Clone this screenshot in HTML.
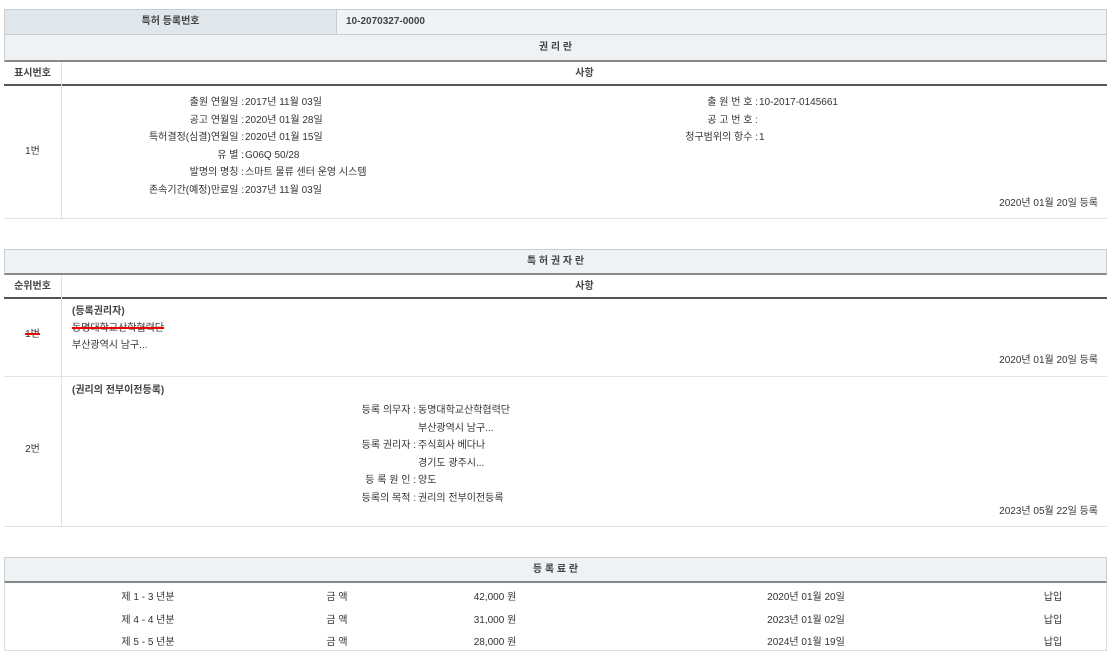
<!DOCTYPE html>
<html><head><meta charset="utf-8"><style>
*{margin:0;padding:0;box-sizing:border-box}
body{width:1112px;height:657px;background:#fff;font-family:"Liberation Sans","Noto Sans CJK KR",sans-serif;font-size:10px;color:#333;position:relative;overflow:hidden}
div{position:absolute}
.t{white-space:nowrap;line-height:12px}
.r{text-align:right}
.c{text-align:center}
.b{font-weight:bold;color:#444}
.hd{background:#eef2f5;border:1px solid #c8cdd1;border-bottom:2px solid #888}
.sub{border-bottom:2px solid #555}
.row{border-bottom:1px solid #e2e2e2}
.vl{border-left:1px solid #e2e2e2}
</style></head><body>
<!-- Section 1 -->
<div style="left:4px;top:9px;width:333px;height:26px;background:#dfe6ec;border:1px solid #c8cdd1"></div>
<div style="left:336px;top:9px;width:771px;height:26px;background:#eef3f6;border:1px solid #c8cdd1"></div>
<div class="t b c" style="left:4px;top:16px;width:333px">특허 등록번호</div>
<div class="t b" style="left:346px;top:16px">10-2070327-0000</div>
<div class="hd" style="left:4px;top:34px;width:1103px;height:28px"></div>
<div class="t b c" style="left:4px;top:42px;width:1103px">권 리 란</div>
<div class="sub" style="left:4px;top:62px;width:1103px;height:24px"></div>
<div class="vl" style="left:61px;top:62px;width:1px;height:157px"></div>
<div class="t b c" style="left:4px;top:68px;width:57px">표시번호</div>
<div class="t b c" style="left:62px;top:68px;width:1045px">사항</div>
<div class="row" style="left:4px;top:86px;width:1103px;height:133px"></div>
<div class="t c" style="left:4px;top:146px;width:57px">1번</div>
<div class="t r" style="left:60px;top:94px;width:184px;line-height:17.6px">출원 연월일 :<br>공고 연월일 :<br>특허결정(심결)연월일 :<br>유 별 :<br>발명의 명칭 :<br>존속기간(예정)만료일 :</div>
<div class="t" style="left:245px;top:94px;line-height:17.6px">2017년 11월 03일<br>2020년 01월 28일<br>2020년 01월 15일<br>G06Q 50/28<br>스마트 물류 센터 운영 시스템<br>2037년 11월 03일</div>
<div class="t r" style="left:600px;top:94px;width:158px;line-height:17.6px">출 원 번 호 :<br>공 고 번 호 :<br>청구범위의 항수 :</div>
<div class="t" style="left:759px;top:94px;line-height:17.6px">10-2017-0145661<br><br>1</div>
<div class="t r" style="left:900px;top:198px;width:198px">2020년 01월 20일 등록</div>
<!-- Section 2 -->
<div class="hd" style="left:4px;top:249px;width:1103px;height:26px"></div>
<div class="t b c" style="left:4px;top:256px;width:1103px">특 허 권 자 란</div>
<div class="sub" style="left:4px;top:275px;width:1103px;height:24px"></div>
<div class="vl" style="left:61px;top:275px;width:1px;height:252px"></div>
<div class="t b c" style="left:4px;top:281px;width:57px">순위번호</div>
<div class="t b c" style="left:62px;top:281px;width:1045px">사항</div>
<div class="row" style="left:4px;top:299px;width:1103px;height:78px"></div>
<div class="t c" style="left:4px;top:329px;width:57px;text-decoration:line-through;text-decoration-color:#e00;text-decoration-thickness:2px">1번</div>
<div class="t b" style="left:72px;top:306px">(등록권리자)</div>
<div class="t" style="left:72px;top:323px;text-decoration:line-through;text-decoration-color:#e00;text-decoration-thickness:2px">동명대학교산학협력단</div>
<div class="t" style="left:72px;top:340px">부산광역시 남구...</div>
<div class="t r" style="left:900px;top:355px;width:198px">2020년 01월 20일 등록</div>
<div class="row" style="left:4px;top:377px;width:1103px;height:150px"></div>
<div class="t c" style="left:4px;top:444px;width:57px">2번</div>
<div class="t b" style="left:72px;top:385px">(권리의 전부이전등록)</div>
<div class="t r" style="left:300px;top:402px;width:116px;line-height:17.6px">등록 의무자 :<br><br>등록 권리자 :<br><br>등 록 원 인 :<br>등록의 목적 :</div>
<div class="t" style="left:418px;top:402px;line-height:17.6px">동명대학교산학협력단<br>부산광역시 남구...<br>주식회사 베다나<br>경기도 광주시...<br>양도<br>권리의 전부이전등록</div>
<div class="t r" style="left:900px;top:506px;width:198px">2023년 05월 22일 등록</div>
<!-- Section 3 -->
<div class="hd" style="left:4px;top:557px;width:1103px;height:26px"></div>
<div class="t b c" style="left:4px;top:564px;width:1103px">등 록 료 란</div>
<div class="row" style="left:4px;top:583px;width:1103px;height:68px;border:1px solid #ddd;border-top:none"></div>
<div class="t c" style="left:88px;top:587px;width:120px;line-height:22.5px">제 1 - 3 년분<br>제 4 - 4 년분<br>제 5 - 5 년분</div>
<div class="t c" style="left:297px;top:587px;width:80px;line-height:22.5px">금 액<br>금 액<br>금 액</div>
<div class="t c" style="left:445px;top:587px;width:100px;line-height:22.5px">42,000 원<br>31,000 원<br>28,000 원</div>
<div class="t c" style="left:746px;top:587px;width:120px;line-height:22.5px">2020년 01월 20일<br>2023년 01월 02일<br>2024년 01월 19일</div>
<div class="t c" style="left:1028px;top:587px;width:50px;line-height:22.5px">납입<br>납입<br>납입</div>
</body></html>
